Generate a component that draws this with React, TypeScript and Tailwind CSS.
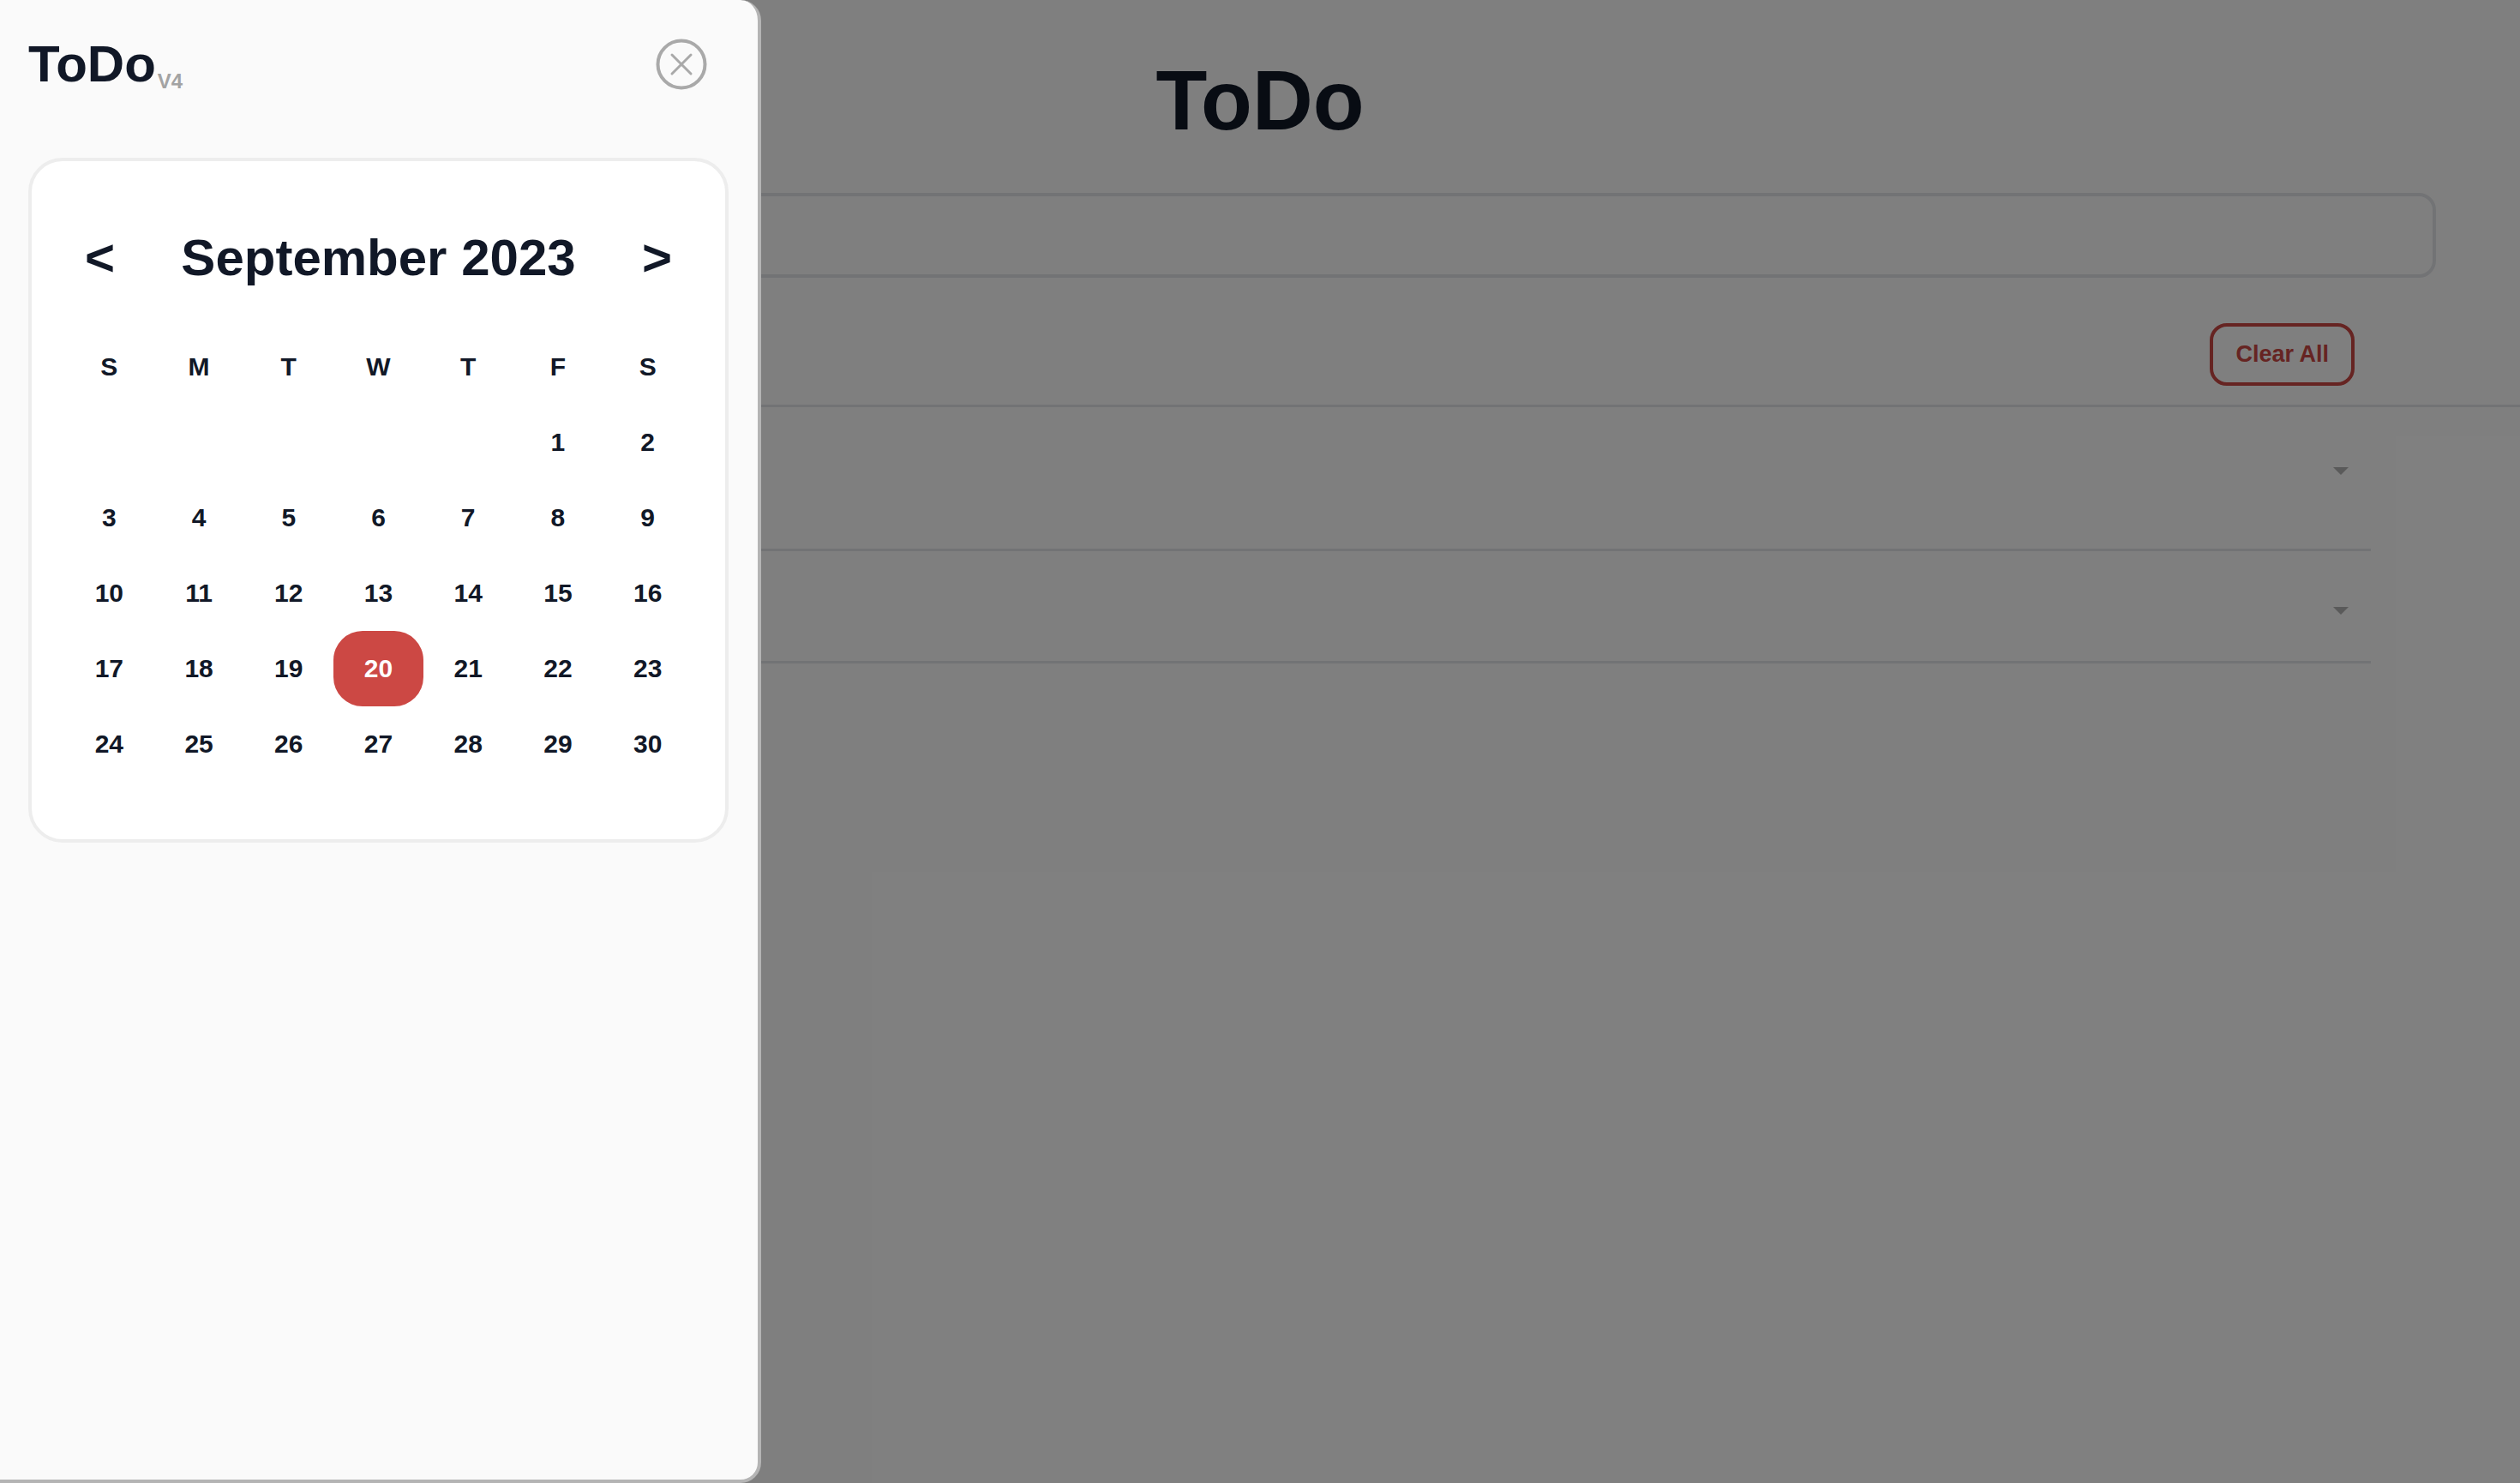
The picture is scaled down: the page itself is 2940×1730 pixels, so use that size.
import React from "react";

const WEEKDAYS = ["S", "M", "T", "W", "T", "F", "S"];

// September 2023 starts on a Friday
const buildDays = () => {
  const cells: (number | null)[] = [];
  for (let i = 0; i < 5; i++) cells.push(null);
  for (let d = 1; d <= 30; d++) cells.push(d);
  return cells;
};

const CloseIcon: React.FC = () => (
  <svg width="60" height="60" viewBox="0 0 60 60" fill="none">
    <circle cx="30" cy="30" r="27.5" stroke="#a9a9a9" strokeWidth="4" />
    <path
      d="M19 19L41 41M41 19L19 41"
      stroke="#a9a9a9"
      strokeWidth="3"
      strokeLinecap="round"
    />
  </svg>
);

const Caret: React.FC = () => (
  <svg width="18" height="9" viewBox="0 0 18 9">
    <polygon points="0,0 18,0 9,9" fill="#b4b4b4" />
  </svg>
);

const Calendar: React.FC = () => {
  const days = buildDays();
  const selected = 20;

  return (
    <div className="ml-[33px] mr-[34px] mt-[79px] rounded-[40px] border-4 border-[#ededed] bg-white px-[38px] pb-[67px] pt-[83px]">
      {/* Month header */}
      <div className="flex h-[60px] items-center justify-between px-[24px] text-[60px] font-bold leading-none text-[#111827]">
        <button className="leading-none">&lt;</button>
        <span>September 2023</span>
        <button className="leading-none">&gt;</button>
      </div>

      {/* Days grid */}
      <div className="mt-[53px] grid grid-cols-7 text-[30px] font-bold leading-none text-[#111827]">
        {WEEKDAYS.map((d, i) => (
          <div key={"w" + i} className="flex h-[88px] items-center justify-center">
            {d}
          </div>
        ))}
        {days.map((d, i) => (
          <div key={i} className="flex h-[88px] items-center justify-center">
            {d === selected ? (
              <span className="flex h-[88px] w-full items-center justify-center rounded-[34px] bg-[#cc4844] text-white">
                {d}
              </span>
            ) : (
              d
            )}
          </div>
        ))}
      </div>
    </div>
  );
};

export default function App() {
  return (
    <div className="relative h-[1730px] w-full overflow-hidden bg-white font-['Liberation_Sans',Arial,sans-serif]">
      {/* Page behind the drawer */}
      <main className="flex flex-col">
        <h1 className="mt-[68px] text-center text-[98px] font-bold leading-none text-[#111827]">
          ToDo
        </h1>
        <div className="ml-[102px] mr-[98px] mt-[59px] h-[99px] rounded-[20px] border-4 border-gray-200" />

        <div className="flex justify-end border-b-[3px] border-gray-200 pb-[22px] pr-[193px] pt-[53px]">
          <button className="flex h-[73px] items-center rounded-[20px] border-4 border-[#cc4844] px-[26px] text-[27px] font-bold leading-none text-[#cc4844]">
            Clear All
          </button>
        </div>

        <div className="ml-[102px] mr-[174px] flex flex-col">
          <div className="flex h-[168px] items-start justify-end border-b-[3px] border-gray-200 pr-[26px] pt-[70px]">
            <Caret />
          </div>
          <div className="flex h-[131px] items-start justify-end border-b-[3px] border-gray-200 pr-[26px] pt-[65px]">
            <Caret />
          </div>
        </div>
      </main>

      {/* Backdrop */}
      <div className="absolute inset-0 bg-black/50" />

      {/* Drawer */}
      <aside className="absolute left-0 top-0 flex h-[1730px] w-[888px] flex-col rounded-r-[24px] border-b-4 border-r-4 border-[#b4b4b4] bg-[#fafafa]">
        <div className="flex items-center justify-between pl-[33px] pr-[59px] pt-[45px]">
          <div className="flex items-end">
            <h2 className="text-[60px] font-bold leading-none text-[#111827]">
              ToDo
            </h2>
            <span className="mb-[-2px] ml-[2px] text-[24px] font-bold leading-none text-[#a3a3a3]">
              V4
            </span>
          </div>
          <button className="h-[60px] w-[60px]">
            <CloseIcon />
          </button>
        </div>

        <Calendar />
      </aside>
    </div>
  );
}
